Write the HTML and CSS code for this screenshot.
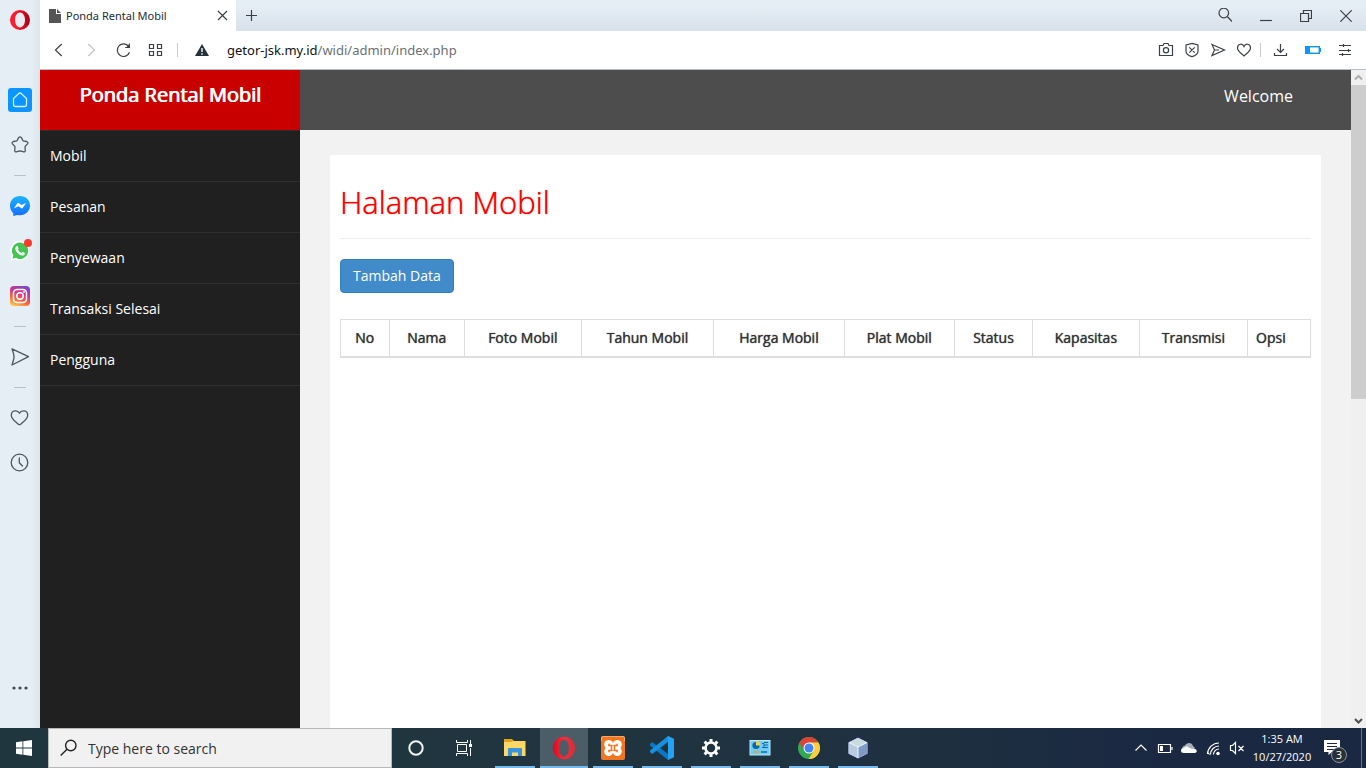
FILE: index.html
```html
<!DOCTYPE html>
<html lang="id">
<head>
<meta charset="utf-8">
<title>Ponda Rental Mobil</title>
<link rel="stylesheet" href="styles.css">
</head>
<body>
<div class="browser">
  <aside class="rail" aria-label="Browser sidebar">
    <button class="rail-btn rail-logo" aria-label="Opera menu"><svg width="20" height="20" viewBox="0 0 20 20"><defs><linearGradient id="og" x1="0" x2="1"><stop offset=".3" stop-color="#ff1b2d"/><stop offset="1" stop-color="#a70014"/></linearGradient></defs><path fill="url(#og)" fill-rule="evenodd" d="M10 0a10 10 0 1 0 0 20a10 10 0 1 0 0-20zM10 2.600c3 0 5 3.400 5 7.400s-2 7.400-5 7.400s-5-3.400-5-7.400s2-7.400 5-7.400z"/></svg></button>
    <button class="rail-btn rail-home" aria-label="Home"><svg width="24" height="24" viewBox="0 0 24 24"><rect width="24" height="24" rx="3" fill="#0a95ff"/><path d="M5.500 10.500L10.800 5.500q1.200-1 2.400 0L18.500 10.500V16.500q0 2-2 2h-9q-2 0-2-2z" fill="none" stroke="#d5efff" stroke-width="1.300"/></svg></button>
    <button class="rail-btn" aria-label="Bookmarks"><svg class="line" width="20" height="20" viewBox="0 0 20 20"><path d="M8.500 2.900Q10 .9 11.500 2.900L13 5.800L16.500 6.500Q18.700 7.300 17.500 8.800L15 11.700L15.300 15.500Q15 17.600 13 16.700L10 15.900L7 16.700Q5 17.600 4.700 15.500L5 11.700L2.500 8.800Q1.300 7.300 3.500 6.500L7 5.800z"/></svg></button>
    <span class="rail-sep"></span>
    <button class="rail-btn" aria-label="Messenger"><svg width="20" height="20" viewBox="0 0 20 20"><defs><linearGradient id="mg" x2="0" y2="1"><stop stop-color="#19b5ff"/><stop offset="1" stop-color="#176dff"/></linearGradient></defs><path fill="url(#mg)" d="M10 0c5.700 0 10 4 10 9.600s-4.300 9.700-10 9.700q-1.500 0-2.800-.4L3.300 20V17.300Q0 14.300 0 9.600C0 4 4.300 0 10 0z"/><path fill="#fff" d="M4 12.300L7.300 7.300Q8 6.600 9 7.300L11.400 9L16 7L12.700 12Q12 12.700 11 12.100L8.600 10.300z"/></svg></button>
    <button class="rail-btn rail-wa" aria-label="WhatsApp"><svg width="20" height="20" viewBox="0 0 20 20"><path fill="#fff" d="M10 0a9.700 9.700 0 1 1-4.700 18.500L.2 20L1.700 15A9.700 9.700 0 0 1 10 0z"/><path fill="#44c553" d="M10 1.600a8.200 8.200 0 1 1-4.300 15.200L2.400 17.700L3.400 14.500A8.200 8.200 0 0 1 10 1.600z"/><path fill="#fff" d="M6.200 5.400Q7.500 4.400 8 5.700L8.600 7.200Q8.600 7.800 7.800 8.600Q9 11 11.500 12Q12.400 10.900 12.900 11L14.700 12Q15.200 13 14 14Q12 15.400 9 13.200Q5.800 11 5.300 8.300Q5 6.600 6.200 5.400z"/></svg><i class="rail-dot"></i></button>
    <button class="rail-btn" aria-label="Instagram"><svg width="20" height="20" viewBox="0 0 20 20"><defs><linearGradient id="ig" x1=".25" y1="1" x2=".7" y2="0"><stop stop-color="#ffc24b"/><stop offset=".35" stop-color="#f5613f"/><stop offset=".65" stop-color="#d33291"/><stop offset="1" stop-color="#7a48c8"/></linearGradient></defs><rect width="20" height="20" rx="4" fill="url(#ig)"/><rect x="3.500" y="3.500" width="13" height="13" rx="3.500" fill="none" stroke="#fff" stroke-width="1.500"/><circle cx="10" cy="10" r="3.200" fill="none" stroke="#fff" stroke-width="1.500"/><circle cx="14" cy="6" r=".9" fill="#fff"/></svg></button>
    <span class="rail-sep"></span>
    <button class="rail-btn" aria-label="Send"><svg class="line" width="20" height="20" viewBox="0 0 20 20"><path d="M2 1.800L18.500 9.700L2 18L3.500 13Q4.600 9.700 3.500 6.500z"/></svg></button>
    <span class="rail-sep"></span>
    <button class="rail-btn" aria-label="Favorites"><svg class="line" width="20" height="20" viewBox="0 0 20 20"><path d="M9.500 5.200C8 2 1.300 1.500 1.300 7.200c0 4.300 4.700 6.500 7.100 9q1.100.9 2.200 0C13 13.700 17.700 11.500 17.700 7.200c0-5.700-6.700-5.200-8.200-2z"/></svg></button>
    <button class="rail-btn" aria-label="History"><svg class="line" width="20" height="20" viewBox="0 0 20 20"><circle cx="9.500" cy="9.500" r="8.300"/><path d="M9.300 5V9.800L12.500 13"/></svg></button>
    <button class="rail-btn rail-more" aria-label="More"><svg width="20" height="20" viewBox="0 0 20 20" fill="#3f4a53"><circle cx="4" cy="10" r="1.600"/><circle cx="10" cy="10" r="1.600"/><circle cx="16" cy="10" r="1.600"/></svg></button>
  </aside>

  <div class="window">
    <div class="tabbar">
      <div class="tab">
        <svg width="12" height="14" viewBox="0 0 12 14"><path fill="#555" d="M0 0H7V5H12V14H0zM8 0L12 4H8z"/></svg>
        <span class="tab-title">Ponda Rental Mobil</span>
        <button class="icon-btn" aria-label="Close tab"><svg class="ink" width="11" height="11" viewBox="0 0 11 11"><path d="M1 1L10 10M10 1L1 10"/></svg></button>
      </div>
      <button class="icon-btn new-tab" aria-label="New tab"><svg class="ink" width="11" height="11" viewBox="0 0 11 11"><path d="M5.500 0V11M0 5.500H11"/></svg></button>
      <div class="controls">
        <button class="icon-btn" aria-label="Search tabs"><svg class="ink" width="16" height="16" viewBox="0 0 16 16"><circle cx="7.800" cy="5" r="4.800"/><path d="M11.300 8.500L16 13.500"/></svg></button>
        <button class="icon-btn" aria-label="Minimize"><svg class="ink" width="12" height="16" viewBox="0 0 12 16"><path d="M0 12.500H12"/></svg></button>
        <button class="icon-btn" aria-label="Restore"><svg class="ink" width="12" height="12" viewBox="0 0 12 12"><path d="M.5 3.500H8.500V11.500H.5zM3.500 3.500V.5H11.500V8.500H8.500"/></svg></button>
        <button class="icon-btn" aria-label="Close"><svg class="ink" width="12" height="12" viewBox="0 0 12 12"><path d="M.3.3L11.700 11.700M11.700.3L.3 11.700"/></svg></button>
      </div>
    </div>

    <div class="addressbar">
      <div class="nav-icons">
        <button class="icon-btn" aria-label="Back"><svg class="ink" width="16" height="16" viewBox="0 0 16 16"><path d="M10.700 2L4.500 8L10.700 14"/></svg></button>
        <button class="icon-btn" aria-label="Forward"><svg class="ink faint" width="16" height="16" viewBox="0 0 16 16"><path d="M5.300 2L11.500 8L5.300 14"/></svg></button>
        <button class="icon-btn" aria-label="Reload"><svg class="ink" width="16" height="16" viewBox="0 0 16 16"><path d="M14.500 10.300A6.300 6.300 0 1 1 13.700 4.500M14.300 1.500V5.500H10.300"/><path d="M14 3.500V5.300H12z" fill="#3b4045"/></svg></button>
        <button class="icon-btn" aria-label="Speed dial"><svg class="ink" width="16" height="16" viewBox="0 0 16 16"><path d="M2.500 2.500h4v4h-4zM10.500 2.500h4v4h-4zM2.500 9.500h4v4h-4zM10.500 9.500h4v4h-4z"/></svg></button>
      </div>
      <span class="bar-sep"></span>
      <svg class="warning" width="16" height="16" viewBox="0 0 16 16"><path fill="#24313a" d="M8 2L15 14H1z"/><path stroke="#fff" stroke-width="1.400" d="M8 6V10M8 11.300V12.700"/></svg>
      <div class="url" role="textbox" aria-label="Address" contenteditable="true"><span class="host">getor-jsk.my.id</span><span>/widi/admin/index.php</span></div>
      <div class="tools">
        <button class="icon-btn" aria-label="Snapshot"><svg class="ink" width="16" height="16" viewBox="0 0 16 16"><path d="M1.500 3.500H5L6 1.500H10L11 3.500H14.500V13.500H1.500z"/><circle cx="8" cy="8.300" r="2.600"/></svg></button>
        <button class="icon-btn" aria-label="Ad blocker"><svg class="ink" width="16" height="16" viewBox="0 0 16 16"><path d="M8 1.300L14 3V9Q14 13 8 14.700Q2 13 2 9V3zM5.300 5.300L10.700 10.700M10.700 5.300L5.300 10.700"/></svg></button>
        <button class="icon-btn" aria-label="Share"><svg class="ink" width="16" height="16" viewBox="0 0 16 16"><path d="M2 2.500L14.500 8L2 13.500L4.500 8z M4.500 8H9"/></svg></button>
        <button class="icon-btn" aria-label="Save"><svg class="ink" width="16" height="16" viewBox="0 0 16 16"><path d="M8 4.500C6.500 1 1.500 1.500 1.500 6C1.500 9.500 5.500 11.500 8 14C10.500 11.500 14.500 9.500 14.500 6C14.500 1.500 9.500 1 8 4.500z"/></svg></button>
      </div>
      <span class="bar-sep"></span>
      <div class="tools tools-end">
        <button class="icon-btn" aria-label="Downloads"><svg class="ink" width="16" height="16" viewBox="0 0 16 16"><path d="M7.500 2V10.500M4 7L7.500 10.500L11 7M1.500 11V13.500H13.500V11"/></svg></button>
        <button class="icon-btn" aria-label="Battery saver"><svg width="16" height="16" viewBox="0 0 16 16"><rect x=".7" y="4.700" width="13.600" height="6.600" fill="none" stroke="#0a95ff" stroke-width="1.400"/><path fill="#0a95ff" d="M1 5H5V11H1zM14.500 6H16V10H14.500z"/></svg></button>
        <button class="icon-btn" aria-label="Easy setup"><svg class="ink" width="16" height="16" viewBox="0 0 16 16"><path d="M2 3.500H14M2 8.500H14M2 12.500H14M6.500 2V5M11.500 7V10M5.500 11V14"/></svg></button>
      </div>
    </div>

    <div class="viewport">
      <div class="site">
        <nav class="menu">
          <a class="brand" href="#">Ponda Rental Mobil</a>
          <ul>
            <li><a href="#">Mobil</a></li>
            <li><a href="#">Pesanan</a></li>
            <li><a href="#">Penyewaan</a></li>
            <li><a href="#">Transaksi Selesai</a></li>
            <li><a href="#">Pengguna</a></li>
          </ul>
        </nav>
        <div class="page">
          <header class="topbar">Welcome</header>
          <main class="card">
            <h2>Halaman Mobil</h2>
            <hr>
            <button class="add">Tambah Data</button>
            <table>
              <thead><tr>
                <th>No</th><th>Nama</th><th>Foto Mobil</th><th>Tahun Mobil</th><th>Harga Mobil</th><th>Plat Mobil</th><th>Status</th><th>Kapasitas</th><th>Transmisi</th><th class="left">Opsi</th>
              </tr></thead>
            </table>
          </main>
        </div>
      </div>
      <div class="scrollbar">
        <svg width="15" height="15" viewBox="0 0 15 15"><path d="M4 9.500L7.500 6L11 9.500" fill="none" stroke="#adadad" stroke-width="2"/></svg>
        <div class="track"><div class="thumb"></div></div>
        <svg width="15" height="15" viewBox="0 0 15 15"><path d="M4 6L7.500 9.500L11 6" fill="none" stroke="#505050" stroke-width="2"/></svg>
      </div>
    </div>
  </div>
</div>

<footer class="taskbar">
  <button class="start" aria-label="Start"><svg width="16" height="16" viewBox="0 0 16 16" fill="#fff"><path d="M0 2.200L6.500 1.300V7.500H0zM7.300 1.200L16 0V7.500H7.300zM0 8.400H6.500V14.700L0 13.800zM7.300 8.400H16V16L7.300 14.800z"/></svg></button>
  <label class="search">
    <svg width="18" height="18" viewBox="0 0 18 18" fill="none" stroke="#222" stroke-width="1.400"><circle cx="10.800" cy="6.500" r="5.200"/><path d="M7 10.200L.7 16.500"/></svg>
    <input type="text" placeholder="Type here to search" aria-label="Search">
  </label>
  <div class="sys">
    <button class="task" aria-label="Cortana"><svg width="18" height="18" viewBox="0 0 18 18"><circle cx="9" cy="9" r="6.700" fill="none" stroke="#f4f4f4" stroke-width="2"/></svg></button>
    <button class="task" aria-label="Task view"><svg width="18" height="18" viewBox="0 0 18 18" fill="none" stroke="#fff"><path d="M1.500 1V3.500H12.500V1M2.500 5.500H11.500V12.500H2.500zM1.500 17V14.500H12.500V17M15.500 1V5M15.500 9V17"/><path fill="#fff" stroke="none" d="M14 5h3v3h-3z"/></svg></button>
  </div>
  <div class="apps">
    <button class="task open" aria-label="File Explorer"><svg width="24" height="24" viewBox="0 0 24 24"><path fill="#e0a31b" d="M1 3H9L11 5H22V8H1z"/><path fill="#ffd766" d="M1 6H8L10 5H22.500V20H1z"/><path fill="#3795dd" d="M5 20V13Q5 12 6 12H18Q19 12 19 13V20H15V16.500H9V20z"/></svg></button>
    <button class="task open active" aria-label="Opera"><svg width="24" height="24" viewBox="0 0 24 24"><defs><linearGradient id="ob" x1="0" x2="1"><stop stop-color="#d80a20"/><stop offset=".5" stop-color="#ff2a3b"/><stop offset="1" stop-color="#c9333b"/></linearGradient></defs><path fill="url(#ob)" fill-rule="evenodd" d="M12 .8a11.200 11.200 0 1 0 0 22.400a11.200 11.200 0 1 0 0-22.400zM12 3.400c3 0 4.800 4 4.800 8.600s-1.800 8.600-4.800 8.600s-4.800-4-4.800-8.600s1.800-8.600 4.800-8.600z"/></svg></button>
    <button class="task open" aria-label="XAMPP"><svg width="24" height="24" viewBox="0 0 24 24"><rect width="24" height="24" rx="2" fill="#f0761f"/><path d="M.5 5V2q0-1.500 1.500-1.500h20q1.500 0 1.500 1.500V5" fill="none" stroke="#f9a468"/><g fill="#fff"><circle cx="7.700" cy="8.500" r="4.500"/><circle cx="16.300" cy="8.500" r="4.500"/><circle cx="7.700" cy="15.500" r="4.500"/><circle cx="16.300" cy="15.500" r="4.500"/><path d="M9 8h6v8H9z"/></g><path d="M8 8.300V9.500H11M16 8.300V9.500H13M8 15.700V14.500H11M16 15.700V14.500H13M10.500 9.500V14.500M13.500 9.500V14.500" fill="none" stroke="#f0761f" stroke-width="1.600" stroke-linecap="round"/></svg></button>
    <button class="task open" aria-label="Visual Studio Code"><svg width="24" height="24" viewBox="0 0 24 24"><path fill="#0b78c5" d="M0 8L2.200 6L18 18V24L0 9.500z"/><path fill="#1690df" d="M0 16L2.200 18L18 6V0L0 14.500z"/><path fill="#26a2f3" d="M18 0L24 2.700V21.300L18 24z"/></svg></button>
    <button class="task open" aria-label="Settings"><svg width="20" height="20" viewBox="0 0 20 20"><circle cx="10" cy="10" r="5.500" fill="none" stroke="#fff" stroke-width="2.600"/><g stroke="#fff" stroke-width="3"><path d="M10 1V4M10 16V19M1 10H4M16 10H19M3.600 3.600L5.700 5.700M14.300 14.300L16.400 16.400M3.600 16.400L5.700 14.300M14.300 5.700L16.400 3.600"/></g></svg></button>
    <button class="task open" aria-label="Control Panel"><svg width="22" height="22" viewBox="0 0 22 22"><rect x="1" y="3.500" width="20" height="14.500" fill="#6fcdf7" stroke="#b9eaff"/><circle cx="7" cy="8.500" r="3.600" fill="#0d66ad"/><path fill="#ffce45" d="M7 8.500V4A4.500 4.500 0 0 1 11.500 8.500z"/><path d="M13 6.500H15V10.500H13M15 5.500H19M15 8H19M15 10.500H19" stroke="#136bab" fill="none"/><path d="M4 15H10" stroke="#ed9d29" stroke-width="1.500"/><path d="M12 15H18" stroke="#1868ab" stroke-width="1.500"/></svg></button>
    <button class="task open" aria-label="Chrome"><svg width="24" height="24" viewBox="0 0 24 24"><circle cx="12" cy="12" r="11" fill="#32a852"/><path fill="#db4437" d="M2.500 6.500A11 11 0 0 1 21.500 6.500H12L7.200 14.700z"/><path fill="#ffcd40" d="M21.500 6.500A11 11 0 0 1 11.500 23L16.800 14.700L12 6.500z"/><circle cx="12" cy="12" r="5.500" fill="#fff"/><circle cx="12" cy="12" r="4.500" fill="#4285f4"/></svg></button>
    <button class="task open" aria-label="NetBeans"><svg width="24" height="24" viewBox="0 0 24 24"><path fill="#c8dce0" stroke="#201d56" d="M12 1L22 6V18L12 23L2 18V6z"/><path fill="#b9cbe0" d="M2.600 6.500L12 11V22.200L2.600 17.500z"/><path fill="#7f9bc4" d="M21.400 6.500L12 11V22.200L21.400 17.500z"/><path stroke="#eef6fa" fill="none" d="M3 6.500L12 11L21 6.500M12 11V22"/></svg></button>
  </div>
  <div class="tray">
    <button class="icon-btn" aria-label="Hidden icons"><svg width="16" height="16" viewBox="0 0 16 16" class="white"><path d="M2.500 10.500L8 5L13.500 10.500"/></svg></button>
    <button class="icon-btn" aria-label="Battery"><svg width="16" height="16" viewBox="0 0 16 16" class="white"><path d="M1.500 4.500H13.500V12.500H1.500zM15 7V10"/><path fill="#fff" stroke="none" d="M3 6H6V11H3z"/></svg></button>
    <button class="icon-btn" aria-label="OneDrive"><svg width="16" height="16" viewBox="0 0 16 16"><path fill="#aab0ba" d="M1 9Q1 6 4 5.500Q5 3 8 3Q11 3 12 6L14 8L8 11z"/><path fill="#fff" d="M3 13Q0 13 0 10.500Q0 8 3 8Q5 5.500 8 7.500L11 9Q13 8 15 9.500Q17 12 14 13z"/></svg></button>
    <button class="icon-btn" aria-label="Network"><svg width="16" height="16" viewBox="0 0 16 16" class="white"><path d="M2.500 14A11.500 11.500 0 0 1 14 3M5.500 14.500A8.500 8.500 0 0 1 14 6M8.500 14.500A5.500 5.500 0 0 1 14 9M2.500 12L4.500 14.500"/><circle cx="13" cy="13.500" r="1.200" fill="#fff"/></svg></button>
    <button class="icon-btn" aria-label="Volume muted"><svg width="16" height="16" viewBox="0 0 16 16" class="white"><path d="M1.500 5.500H3.500L6.500 2.500V13.500L3.500 10.500H1.500zM9.500 6L14.500 11M14.500 6L9.500 11"/></svg></button>
    <div class="clock"><time>1:35 AM</time><time>10/27/2020</time></div>
    <button class="icon-btn notes" aria-label="3 notifications"><svg width="18" height="16" viewBox="0 0 18 16"><path fill="#fff" d="M1 0H17V12H9L5.500 15V12H1z"/><path stroke="#1b2a42" d="M4 3.500H14M4 6.500H14M4 9.500H14"/></svg><span class="badge">3</span></button>
    <span class="peek"></span>
  </div>
</footer>
</body>
</html>
```

FILE: styles.css
```css
* { box-sizing: border-box; }
body {
  margin: 0;
  height: 100vh;
  display: flex;
  flex-direction: column;
  overflow: hidden;
  font: 14px/20px "Open Sans", "Noto Sans", sans-serif;
  background: #fff;
}
button { border: 0; padding: 0; background: none; font: inherit; color: inherit; }
svg { display: block; flex: none; }
a { color: inherit; text-decoration: none; }
.browser { flex: 1; min-height: 0; display: flex; }

/* Browser sidebar */
.rail {
  flex: none;
  width: 40px;
  background: linear-gradient(90deg, #e5edf5 80%, #dce4ec);
  display: flex;
  flex-direction: column;
  align-items: center;
  padding-top: 10px;
}
.rail-btn { position: relative; width: 24px; height: 24px; margin-bottom: 21px; display: grid; place-items: center; }
.rail-logo { height: 20px; margin-bottom: 58px; }
.rail-sep { width: 12px; height: 1px; background: #b3c2ce; margin: -3px 0 18px; }
.rail-dot { position: absolute; top: 0; right: 0; width: 8px; height: 8px; border-radius: 50%; background: #ff392e; }
.rail-more { margin: auto 0 28px; }
.line { fill: none; stroke: #4c5761; stroke-width: 1.3; stroke-linejoin: round; stroke-linecap: round; }

/* Browser chrome */
.window { flex: 1; min-width: 0; display: flex; flex-direction: column; }
.tabbar { flex: none; height: 31px; display: flex; align-items: center; background: linear-gradient(#e5edf5 20%, #d8e0e9); }
.tab { width: 196px; height: 31px; padding: 0 8px 0 9px; display: flex; align-items: center; background: #fff; }
.tab-title { flex: 1; margin-left: 5px; font-family: "Noto Sans", sans-serif; font-size: 11px; color: #222b33; }
.icon-btn { position: relative; display: grid; place-items: center; }
.new-tab { margin-left: 10px; }
.ink { fill: none; stroke: #3b4045; stroke-width: 1.2; }
.faint { stroke: #c0c3c6; }
.controls { margin-left: auto; display: flex; align-items: center; gap: 28px; padding-right: 14px; }
.addressbar { flex: none; height: 39px; display: flex; align-items: center; background: #fff; border-bottom: 1px solid #b5bcc4; padding: 0 13px 0 11px; }
.nav-icons { display: flex; gap: 16px; }
.bar-sep { width: 1px; height: 14px; background: #c9cbcd; }
.nav-icons + .bar-sep { margin: 0 16px 0 14px; }
.url { flex: 1; margin-left: 17px; font-family: "Noto Sans", sans-serif; font-size: 13px; color: #6b7075; outline: 0; }
.host { color: #111; }
.tools { display: flex; gap: 10px; margin-right: 8px; }
.tools-end { gap: 16px; margin: 0 0 0 12px; }

/* Site */
.viewport { flex: 1; min-height: 0; display: flex; }
.site { flex: 1; display: flex; min-width: 0; background: #f2f2f2; }
.menu { flex: none; width: 260px; background: #202020; color: #fff; }
.brand { display: block; height: 60px; padding-top: 10px; background: #c80000; font-size: 20px; line-height: 30px; text-align: center; text-shadow: 1px 0 #fff; }
.menu ul { list-style: none; margin: 0; padding: 0; border-top: 1px solid #2b2b2b; }
.menu li { border-bottom: 1px solid #303030; }
.menu li a { display: block; padding: 15px 10px; }
.page { flex: 1; min-width: 0; display: flex; flex-direction: column; }
.topbar { flex: none; height: 60px; padding: 15px 58px; background: #4d4d4d; color: #fff; font-size: 16px; line-height: 22px; text-align: right; }
.card { flex: 1; margin: 25px 30px 0; padding: 30px 10px; background: #fff; }
h2 { margin: 0; font-size: 31px; line-height: 34px; font-weight: 300; color: #f00; text-shadow: 0 0 1px #f00; }
hr { border: 0; border-top: 1px solid #eee; margin: 19px 0 20px; }
.add { height: 34px; padding: 0 12px; background: #428bca; border: 1px solid #357ebd; border-radius: 4px; color: #fff; }
table { width: 100%; margin-top: 26px; border-collapse: collapse; color: #333; }
th { border: 1px solid #ddd; border-bottom-width: 2px; padding: 8px; font-weight: 400; text-align: center; white-space: nowrap; text-shadow: 0 0 1px #333; }
.left { text-align: left; }
.scrollbar { flex: none; width: 15px; display: flex; flex-direction: column; background: #f0f0f0; }
.track { flex: 1; }
.thumb { height: 50%; background: #cdcdcd; }

/* Taskbar */
.taskbar { flex: none; height: 40px; display: flex; background: linear-gradient(90deg, #20363f 30%, #1f3140 65%, #1a2842 85%); color: #fff; }
.start { width: 48px; display: grid; place-items: center; }
.search { width: 344px; padding-left: 11px; display: flex; align-items: center; gap: 10px; background: #f1f1f1; border: 1px solid #b9b9b9; }
.search input { flex: 1; min-width: 0; border: 0; padding: 2px 0 0; background: none; outline: 0; font: inherit; color: #222; }
.search input::placeholder { color: #333; opacity: 1; }
.sys { display: flex; margin-right: 3px; }
.apps { display: flex; gap: 1px; }
.task { position: relative; width: 48px; display: grid; place-items: center; }
.open::after { content: ""; position: absolute; left: 4px; right: 4px; bottom: 0; height: 2px; background: #76b9ed; }
.active { background: #4b5d66; }
.active::after { left: 0; right: 0; }
.tray { margin-left: auto; display: flex; align-items: center; gap: 8px; padding-right: 4px; }
.white { fill: none; stroke: #fff; stroke-width: 1.2; }
.clock { width: 58px; display: flex; flex-direction: column; align-items: center; font-size: 11px; line-height: 18px; }
.notes { margin: 0 12px 0 4px; }
.badge { position: absolute; left: 8px; top: 7px; width: 16px; height: 16px; border-radius: 50%; background: #2a3038; border: 1px solid #8d939a; font-size: 11px; line-height: 14px; text-align: center; }
.peek { width: 1px; height: 40px; background: #67738a; }
```
